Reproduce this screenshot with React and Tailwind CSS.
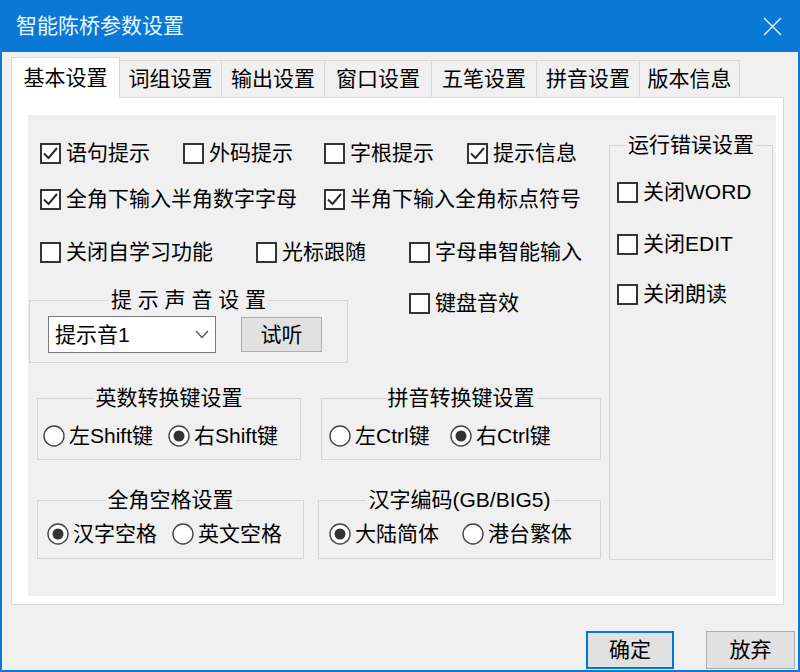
const font = { fontFamily: '"Liberation Sans", "Noto Sans CJK SC", sans-serif' };

const Check = ({ checked, label, className = '' }) => (
  <div className={`flex items-center gap-[5px] h-6 ${className}`}>
    <svg width="21" height="21" viewBox="0 0 21 21" className="shrink-0">
      <rect x="1" y="1" width="19" height="19" fill="#fff" stroke="#2b2b2b" strokeWidth="1.9" />
      {checked && <path d="M4 10.5 L8.5 15 L17 5" fill="none" stroke="#2b2b2b" strokeWidth="2" />}
    </svg>
    <span className="text-[21px] leading-6 text-black whitespace-nowrap">{label}</span>
  </div>
);

const Radio = ({ checked, label, className = '' }) => (
  <div className={`flex items-center gap-[4px] h-6 ${className}`}>
    <svg width="22" height="22" viewBox="0 0 22 22" className="shrink-0">
      <circle cx="11" cy="11" r="10" fill="#fff" stroke="#444" strokeWidth="1.4" />
      {checked && <circle cx="11" cy="11" r="5.5" fill="#333" />}
    </svg>
    <span className="text-[21px] leading-6 text-black whitespace-nowrap">{label}</span>
  </div>
);

const Group = ({ title, className = '', children }) => (
  <fieldset className={`border border-[#d5d5d5] ${className}`}>
    <legend className="mx-auto px-[2px] text-[21px] leading-6 text-black whitespace-nowrap">{title}</legend>
    {children}
  </fieldset>
);

const tabs = [
  ['词组设置', 'w-[102px]'],
  ['输出设置', 'w-[103px]'],
  ['窗口设置', 'w-[107px]'],
  ['五笔设置', 'w-[105px]'],
  ['拼音设置', 'w-[103px]'],
  ['版本信息', 'w-[100px]'],
];

export default function App() {
  return (
    <div style={font} className="w-[800px] h-[672px] bg-[#0a79d6] flex flex-col overflow-hidden">
      {/* title bar */}
      <div className="h-[52px] shrink-0 flex items-center justify-between pl-4 pr-[18px]">
        <span className="text-[21px] text-[#eef6ff]">智能陈桥参数设置</span>
        <svg width="19" height="19" viewBox="0 0 19 19">
          <path d="M1 1 L18 18 M18 1 L1 18" stroke="#eaf4ff" strokeWidth="1.4" />
        </svg>
      </div>

      <div className="flex-1 bg-[#f0f0f0] mx-[2px] mb-[2px] pl-[9px] pt-[5px] flex flex-col">
        {/* tab strip */}
        <div className="flex items-end">
          <div className="relative z-10 -mb-px w-[109px] h-[41px] bg-white border-l border-t border-r border-[#d9d9d9] flex items-center justify-center text-[21px] text-black">
            基本设置
          </div>
          {tabs.map(([t, w]) => (
            <div key={t} className={`${w} h-[37px] border-t border-r border-[#d9d9d9] bg-[#f0f0f0] flex items-center justify-center text-[21px] text-black`}>
              {t}
            </div>
          ))}
        </div>

        {/* tab page */}
        <div className="w-[773px] h-[508px] bg-white border border-[#d9d9d9] pl-4 pt-[17px]">
          <div className="w-[748px] h-[481px] bg-[#f0f0f0] flex items-start">
            {/* left column */}
            <div className="w-[581px] flex flex-col">
              <div className="flex mt-[26px] pl-3">
                <Check checked label="语句提示" className="w-[143px]" />
                <Check label="外码提示" className="w-[141px]" />
                <Check label="字根提示" className="w-[143px]" />
                <Check checked label="提示信息" />
              </div>
              <div className="flex mt-[22px] pl-3">
                <Check checked label="全角下输入半角数字字母" className="w-[284px]" />
                <Check checked label="半角下输入全角标点符号" />
              </div>
              <div className="flex mt-[29px] pl-3">
                <Check label="关闭自学习功能" className="w-[216px]" />
                <Check label="光标跟随" className="w-[153px]" />
                <Check label="字母串智能输入" />
              </div>
              <div className="flex items-start mt-[24px]">
                <Group title="提 示 声 音 设 置" className="ml-px w-[319px] pb-[9px]">
                  <div className="flex items-start mt-[4px] ml-[18px]">
                    <div className="w-[168px] h-[37px] bg-white border border-[#7a7a7a] flex items-center justify-between pl-[6px] pr-[6px]">
                      <span className="text-[21px] leading-6 text-black">提示音1</span>
                      <svg width="14" height="9" viewBox="0 0 14 9">
                        <path d="M1 1 L7 7.5 L13 1" fill="none" stroke="#555" strokeWidth="1.3" />
                      </svg>
                    </div>
                    <button className="ml-[25px] mt-px w-[81px] h-[35px] bg-[#e1e1e1] border border-[#adadad] text-[21px] leading-6 text-black">
                      试听
                    </button>
                  </div>
                </Group>
                <Check label="键盘音效" className="ml-[61px] mt-[3px]" />
              </div>
              <div className="flex items-start mt-[23px]">
                <Group title="英数转换键设置" className="ml-[9px] w-[264px] pb-[11px]">
                  <div className="flex mt-[14px] pl-[5px]">
                    <Radio label="左Shift键" className="w-[125px]" />
                    <Radio checked label="右Shift键" />
                  </div>
                </Group>
                <Group title="拼音转换键设置" className="ml-[20px] w-[280px] pb-[11px]">
                  <div className="flex mt-[14px] pl-[7px]">
                    <Radio label="左Ctrl键" className="w-[121px]" />
                    <Radio checked label="右Ctrl键" />
                  </div>
                </Group>
              </div>
              <div className="flex items-start mt-[28px]">
                <Group title="全角空格设置" className="ml-[9px] w-[267px] pb-[12px]">
                  <div className="flex mt-[10px] pl-[9px]">
                    <Radio checked label="汉字空格" className="w-[125px]" />
                    <Radio label="英文空格" />
                  </div>
                </Group>
                <Group title="汉字编码(GB/BIG5)" className="ml-[14px] w-[283px] pb-[12px]">
                  <div className="flex mt-[10px] pl-[10px]">
                    <Radio checked label="大陆简体" className="w-[133px]" />
                    <Radio label="港台繁体" />
                  </div>
                </Group>
              </div>
            </div>

            {/* right column */}
            <Group title="运行错误设置" className="mt-[18px] w-[164px] h-[427px]">
              <div className="flex flex-col pl-[7px]">
                <Check label="关闭WORD" className="mt-[23px]" />
                <Check label="关闭EDIT" className="mt-[28px]" />
                <Check label="关闭朗读" className="mt-[26px]" />
              </div>
            </Group>
          </div>
        </div>

        {/* dialog buttons */}
        <div className="flex justify-end gap-[32px] mt-[26px] pr-[3px]">
          <button className="w-[88px] h-[38px] bg-[#e1e1e1] border-2 border-[#0078d7] text-[21px] leading-6 text-black">
            确定
          </button>
          <button className="w-[89px] h-[38px] bg-[#e1e1e1] border border-[#adadad] text-[21px] leading-6 text-black">
            放弃
          </button>
        </div>
      </div>
    </div>
  );
}
